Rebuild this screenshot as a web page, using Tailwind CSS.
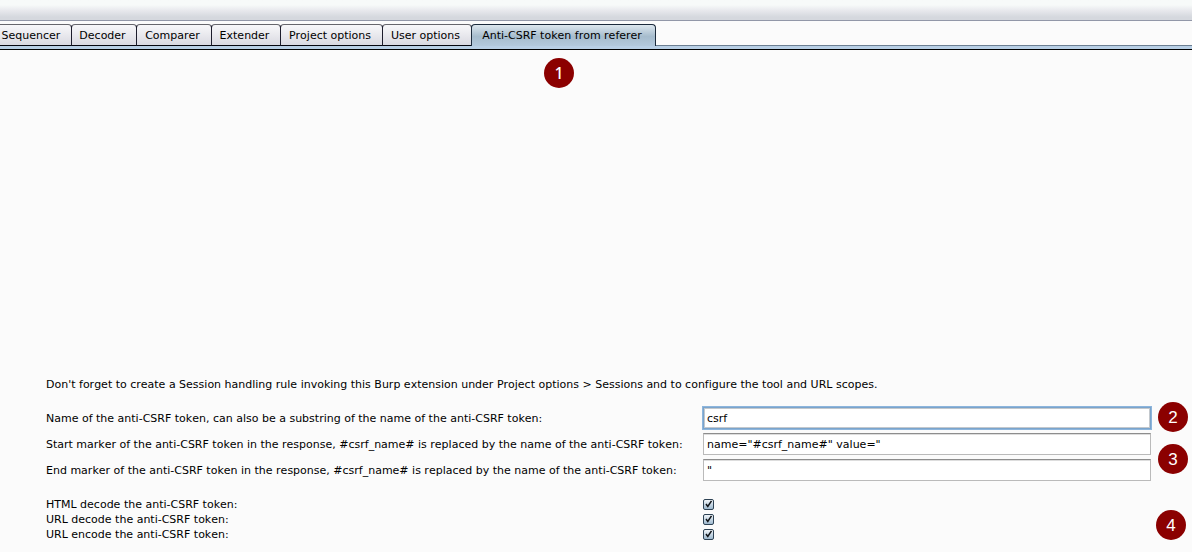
<!DOCTYPE html>
<html lang="en">
<head>
<meta charset="utf-8">
<title>Anti-CSRF token from referer</title>
<script src="https://cdn.jsdelivr.net/npm/@tailwindcss/browser@4"></script>
</head>
<body class="relative min-h-screen overflow-x-hidden bg-[#fbfbfb] font-['DejaVu_Sans',sans-serif] text-[11px] leading-[15px] text-black [font-kerning:none] [font-variant-ligatures:none]">
<header class="h-[21px] border-b border-[#9297a8] bg-linear-to-b from-[#f7faf9] from-25% via-[#e9eaee] via-50% to-[#d5d8de] to-85%"></header>
<nav role="tablist" class="-ml-[7px] flex h-[25px] items-end border-b border-[#6c7f92] pt-[3px] whitespace-nowrap">
  <button role="tab" class="-mb-px h-[22px] w-[79px] rounded-t-[4px] border border-[#66666c] border-x-[#1d1d2c] border-b-[#05060f] bg-linear-to-b from-[#f8f8fa] to-[#d9d9e1] pr-[3px]">Sequencer</button>
  <button role="tab" class="-mb-px -ml-px h-[22px] w-[66px] rounded-t-[4px] border border-[#66666c] border-x-[#1d1d2c] border-b-[#05060f] bg-linear-to-b from-[#f8f8fa] to-[#d9d9e1] pr-[3px]">Decoder</button>
  <button role="tab" class="-mb-px -ml-px h-[22px] w-[76px] rounded-t-[4px] border border-[#66666c] border-x-[#1d1d2c] border-b-[#05060f] bg-linear-to-b from-[#f8f8fa] to-[#d9d9e1] pr-[3px]">Comparer</button>
  <button role="tab" class="-mb-px -ml-px h-[22px] w-[70px] rounded-t-[4px] border border-[#66666c] border-x-[#1d1d2c] border-b-[#05060f] bg-linear-to-b from-[#f8f8fa] to-[#d9d9e1] pr-[3px]">Extender</button>
  <button role="tab" class="-mb-px -ml-px h-[22px] w-[103px] rounded-t-[4px] border border-[#66666c] border-x-[#1d1d2c] border-b-[#05060f] bg-linear-to-b from-[#f8f8fa] to-[#d9d9e1] pr-[3px]">Project options</button>
  <button role="tab" class="-mb-px -ml-px h-[22px] w-[90px] rounded-t-[4px] border border-[#66666c] border-x-[#1d1d2c] border-b-[#05060f] bg-linear-to-b from-[#f8f8fa] to-[#d9d9e1] pr-[3px]">User options</button>
  <button role="tab" aria-selected="true" class="-mb-px -ml-px h-[22px] w-[185px] rounded-t-[4px] border border-b-0 border-[#1c2b3c] bg-linear-to-b from-[#dde7ee] via-[#a6bccd] via-55% to-[#b3c9dd] pr-[3px]">Anti-CSRF token from referer</button>
</nav>
<div class="h-1 border-b border-black bg-[#b8cfe5]"></div>
<main class="pt-[327px] pr-[41px] pl-[46px]">
  <p class="mb-[13px]">Don't forget to create a Session handling rule invoking this Burp extension under Project options &gt; Sessions and to configure the tool and URL scopes.</p>
  <form>
    <div class="grid grid-cols-[657px_1fr] items-center gap-y-1 pt-0.5 whitespace-nowrap">
      <label for="name">Name of the anti-CSRF token, can also be a substring of the name of the anti-CSRF token:</label>
      <input id="name" type="text" value="csrf" class="h-[22px] border border-[#7aa4cc] bg-white px-[3px] inset-shadow-[0_0_0_1px_#c3c8cd] outline outline-[#8db5dc]">
      <label for="start">Start marker of the anti-CSRF token in the response, #csrf_name# is replaced by the name of the anti-CSRF token:</label>
      <input id="start" type="text" value="name=&quot;#csrf_name#&quot; value=&quot;" class="h-[22px] border border-[#bababa] border-t-[#8d8d8d] bg-white px-[3px] inset-shadow-[0_1px_0_#dddddd]">
      <label for="end">End marker of the anti-CSRF token in the response, #csrf_name# is replaced by the name of the anti-CSRF token:</label>
      <input id="end" type="text" value="&quot;" class="h-[22px] border border-[#bababa] border-t-[#8d8d8d] bg-white px-[3px] inset-shadow-[0_1px_0_#dddddd]">
    </div>
    <div class="mt-4 grid grid-cols-[657px_1fr] items-center">
      <label for="hd">HTML decode the anti-CSRF token:</label>
      <span class="grid size-[11px] text-[#101418]">
        <input id="hd" type="checkbox" checked class="col-start-1 row-start-1 size-[11px] appearance-none rounded-[2px] border border-[#2d4254] bg-linear-to-b from-[#f0f5f9] to-[#9eb9cf]">
        <svg viewBox="0 0 11 11" class="pointer-events-none col-start-1 row-start-1 size-[11px]" fill="none" stroke="currentColor" stroke-width="1.5"><path d="M3 5L4.8 7.4L8.5 1.8"/></svg>
      </span>
      <label for="ud">URL decode the anti-CSRF token:</label>
      <span class="grid size-[11px] text-[#101418]">
        <input id="ud" type="checkbox" checked class="col-start-1 row-start-1 size-[11px] appearance-none rounded-[2px] border border-[#2d4254] bg-linear-to-b from-[#f0f5f9] to-[#9eb9cf]">
        <svg viewBox="0 0 11 11" class="pointer-events-none col-start-1 row-start-1 size-[11px]" fill="none" stroke="currentColor" stroke-width="1.5"><path d="M3 5L4.8 7.4L8.5 1.8"/></svg>
      </span>
      <label for="ue">URL encode the anti-CSRF token:</label>
      <span class="grid size-[11px] text-[#101418]">
        <input id="ue" type="checkbox" checked class="col-start-1 row-start-1 size-[11px] appearance-none rounded-[2px] border border-[#2d4254] bg-linear-to-b from-[#f0f5f9] to-[#9eb9cf]">
        <svg viewBox="0 0 11 11" class="pointer-events-none col-start-1 row-start-1 size-[11px]" fill="none" stroke="currentColor" stroke-width="1.5"><path d="M3 5L4.8 7.4L8.5 1.8"/></svg>
      </span>
    </div>
  </form>
</main>
<!-- Numbered callouts over the panel -->
<span class="absolute top-[58px] left-[544px] flex size-[30px] items-center justify-center rounded-full bg-[#8b0000] font-['Noto_Sans',sans-serif] text-base font-medium text-white">1</span>
<span class="absolute top-[402px] right-1 flex size-[30px] items-center justify-center rounded-full bg-[#8b0000] font-['Liberation_Sans',sans-serif] text-[17px] text-white">2</span>
<span class="absolute top-[444px] right-1 flex size-[30px] items-center justify-center rounded-full bg-[#8b0000] font-['Liberation_Sans',sans-serif] text-[17px] text-white">3</span>
<span class="absolute top-[510px] right-[6px] flex size-[30px] items-center justify-center rounded-full bg-[#8b0000] font-['Liberation_Sans',sans-serif] text-[17px] text-white">4</span>
</body>
</html>
